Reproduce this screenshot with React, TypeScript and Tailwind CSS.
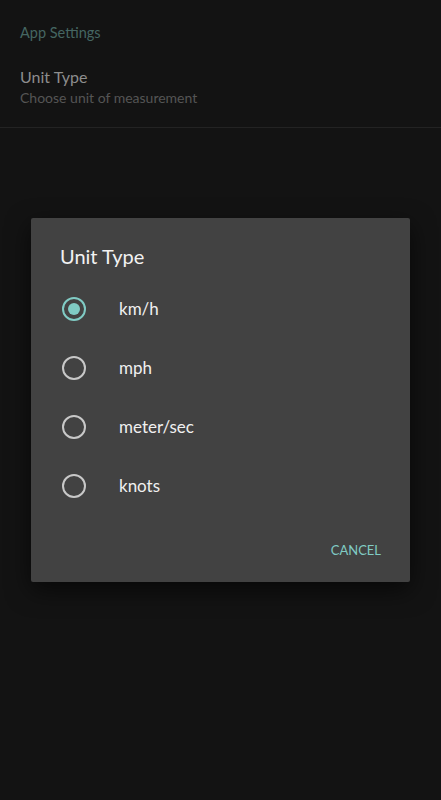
import React from "react";

const OPTIONS = ["km/h", "mph", "meter/sec", "knots"];

function Radio({ checked }: { checked: boolean }) {
  return (
    <span
      className={
        "flex h-6 w-6 items-center justify-center rounded-full border-[2.5px] " +
        (checked ? "border-[#80cbc4]" : "border-[#c8c8c8]")
      }
    >
      {checked && <span className="h-3 w-3 rounded-full bg-[#80cbc4]" />}
    </span>
  );
}

export default function App() {
  const [selected, setSelected] = React.useState("km/h");

  return (
    <div
      className="relative h-[800px] w-full overflow-hidden bg-[#131313]"
      style={{ fontFamily: "Lato, 'Open Sans', sans-serif" }}
    >
      <div className="border-b border-[#232323] px-5 pb-[20px] pt-[24px]">
        <p className="text-[14.5px] leading-[18px] text-[#456662]">App Settings</p>
        <p className="mt-[25px] text-[16px] leading-[20px] text-[#8d8d8d]">Unit Type</p>
        <p className="mt-[2px] text-[14px] leading-[18px] text-[#555555]">
          Choose unit of measurement
        </p>
      </div>

      <div className="absolute inset-0 flex items-center justify-center">
        <div className="h-[364px] w-[379px] rounded-[2px] bg-[#424242] shadow-[0_8px_24px_rgba(0,0,0,0.6)]">
          <h2 className="pl-[29px] pt-[26px] text-[20px] leading-[24px] text-[#f2f2f2]">
            Unit Type
          </h2>
          <div className="mt-[11px] flex flex-col">
            {OPTIONS.map((o) => (
              <button
                key={o}
                onClick={() => setSelected(o)}
                className="flex h-[59px] items-center pl-[31px] text-left"
              >
                <Radio checked={selected === o} />
                <span className="ml-[33px] text-[17px] text-[#f0f0f0]">{o}</span>
              </button>
            ))}
          </div>
          <div className="mt-[26px] flex justify-end pr-[29px]">
            <button className="text-[13px] leading-[18px] text-[#80cbc4]">CANCEL</button>
          </div>
        </div>
      </div>
    </div>
  );
}
